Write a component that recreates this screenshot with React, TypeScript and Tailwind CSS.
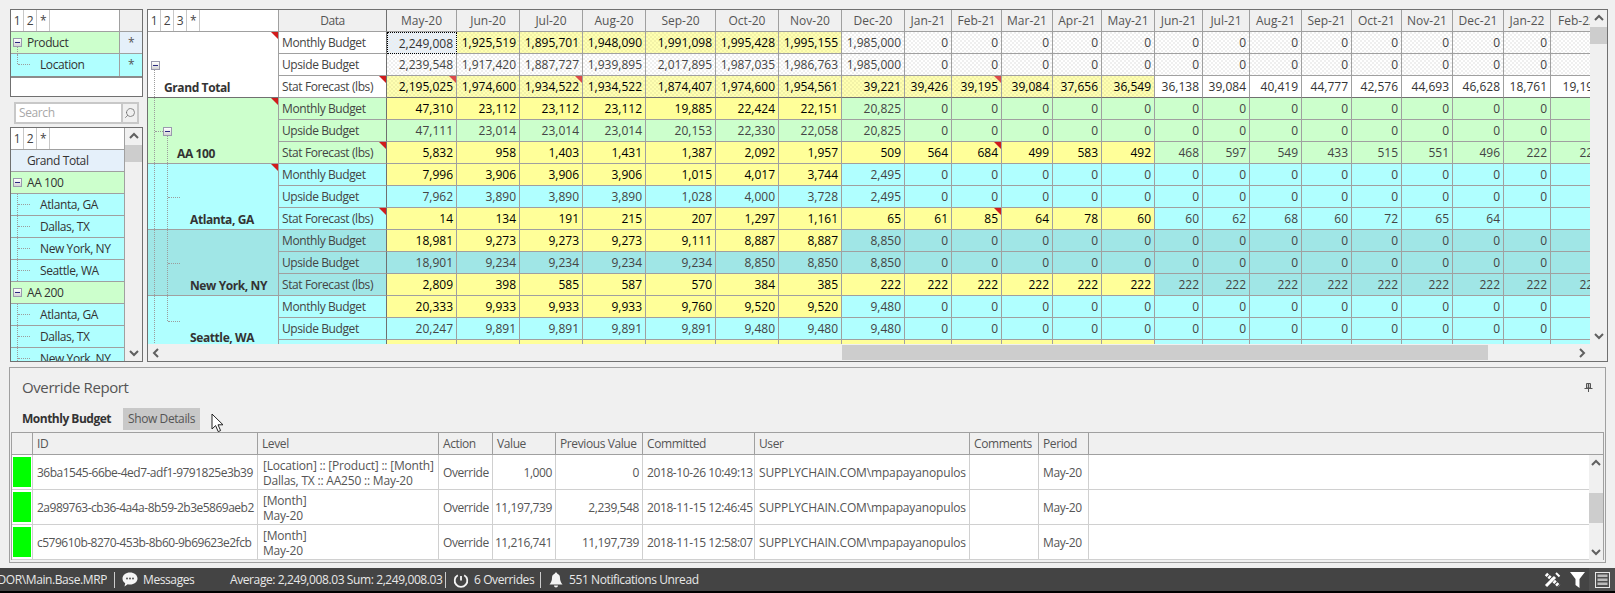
import { ReactNode } from "react"
import { Search } from "lucide-react"

const months = [
  "May-20", "Jun-20", "Jul-20", "Aug-20", "Sep-20", "Oct-20", "Nov-20", "Dec-20", "Jan-21", "Feb-21", "Mar-21",
  "Apr-21", "May-21", "Jun-21", "Jul-21", "Aug-21", "Sep-21", "Oct-21", "Nov-21", "Dec-21", "Jan-22", "Feb-22",
]

const zeros = Array(14).fill("0")

const dots =
  "bg-[radial-gradient(circle_at_1px_1px,#eeeeee_0.7px,transparent_0.8px),radial-gradient(circle_at_3px_3px,#eeeeee_0.7px,transparent_0.8px)] bg-[length:4px_4px]"
const yellowDots =
  "bg-[#ffffb0] bg-[radial-gradient(circle_at_1px_1px,#f2f2a8_0.7px,transparent_0.8px),radial-gradient(circle_at_3px_3px,#f2f2a8_0.7px,transparent_0.8px)] bg-[length:4px_4px]"

interface Row {
  name: string
  vals: string[]
  yellow: number
  marks?: number[]
  plainFrom?: number
}

interface Group {
  label: string
  base: string
  yellowCls: string
  cellCls: string
  pad: string
  labelBottom: string
  mark?: boolean
  lines: ReactNode
  bottom: string
  rows: Row[]
}

const V = "absolute border-l border-dotted border-[#9c9c9c]"
const H = "absolute border-t border-dotted border-[#9c9c9c]"

const groups: Group[] = [
  {
    label: "Grand Total",
    base: "bg-white",
    yellowCls: yellowDots,
    cellCls: `bg-white ${dots}`,
    pad: "pl-[16px]",
    labelBottom: "pb-[1px]",
    mark: true,
    bottom: "border-b-[#707070]",
    lines: (
      <>
        <span className="absolute left-[3px] top-[29px]"><Minus /></span>
        <span className={`${V} left-[6px] top-[38px] bottom-0`} />
      </>
    ),
    rows: [
      {
        name: "Monthly Budget",
        vals: ["2,249,008", "1,925,519", "1,895,701", "1,948,090", "1,991,098", "1,995,428", "1,995,155", "1,985,000", ...zeros],
        yellow: 7,
      },
      {
        name: "Upside Budget",
        vals: ["2,239,548", "1,917,420", "1,887,727", "1,939,895", "2,017,895", "1,987,035", "1,986,763", "1,985,000", ...zeros],
        yellow: 0,
      },
      {
        name: "Stat Forecast (lbs)",
        vals: ["2,195,025", "1,974,600", "1,934,522", "1,934,522", "1,874,407", "1,974,600", "1,954,561", "39,221", "39,426", "39,195", "39,084", "37,656", "36,549", "36,138", "39,084", "40,419", "44,777", "42,576", "44,693", "46,628", "18,761", "19,191"],
        yellow: 13,
        marks: [0, 2, 9],
        plainFrom: 13,
      },
    ],
  },
  {
    label: "AA 100",
    base: "bg-[#ccffcc]",
    yellowCls: "bg-[#ffff99]",
    cellCls: "bg-[#ccffcc]",
    pad: "pl-[29px]",
    labelBottom: "pb-[1px]",
    mark: true,
    bottom: "",
    lines: (
      <>
        <span className={`${V} left-[6px] top-0 bottom-0`} />
        <span className={`${H} left-[7px] w-[8px] top-[33px]`} />
        <span className="absolute left-[15px] top-[29px]"><Minus /></span>
        <span className={`${V} left-[19px] top-[38px] bottom-0`} />
      </>
    ),
    rows: [
      {
        name: "Monthly Budget",
        vals: ["47,310", "23,112", "23,112", "23,112", "19,885", "22,424", "22,151", "20,825", ...zeros],
        yellow: 7,
      },
      {
        name: "Upside Budget",
        vals: ["47,111", "23,014", "23,014", "23,014", "20,153", "22,330", "22,058", "20,825", ...zeros],
        yellow: 0,
      },
      {
        name: "Stat Forecast (lbs)",
        vals: ["5,832", "958", "1,403", "1,431", "1,387", "2,092", "1,957", "509", "564", "684", "499", "583", "492", "468", "597", "549", "433", "515", "551", "496", "222", "222"],
        yellow: 13,
        marks: [9],
      },
    ],
  },
  {
    label: "Atlanta, GA",
    base: "bg-[#b0ffff]",
    yellowCls: "bg-[#ffff99]",
    cellCls: "bg-[#b0ffff]",
    pad: "pl-[42px]",
    labelBottom: "pb-[1px]",
    mark: true,
    bottom: "",
    lines: (
      <>
        <span className={`${V} left-[6px] top-0 bottom-0`} />
        <span className={`${V} left-[19px] top-0 bottom-0`} />
        <span className={`${H} left-[20px] w-[12px] top-[33px]`} />
      </>
    ),
    rows: [
      {
        name: "Monthly Budget",
        vals: ["7,996", "3,906", "3,906", "3,906", "1,015", "4,017", "3,744", "2,495", ...zeros],
        yellow: 7,
      },
      {
        name: "Upside Budget",
        vals: ["7,962", "3,890", "3,890", "3,890", "1,028", "4,000", "3,728", "2,495", ...zeros],
        yellow: 0,
      },
      {
        name: "Stat Forecast (lbs)",
        vals: ["14", "134", "191", "215", "207", "1,297", "1,161", "65", "61", "85", "64", "78", "60", "60", "62", "68", "60", "72", "65", "64", "", ""],
        yellow: 13,
        marks: [9],
      },
    ],
  },
  {
    label: "New York, NY",
    base: "bg-[#a0e6e6]",
    yellowCls: "bg-[#ffff99]",
    cellCls: "bg-[#a0e6e6]",
    pad: "pl-[42px]",
    labelBottom: "pb-[1px]",
    bottom: "",
    lines: (
      <>
        <span className={`${V} left-[6px] top-0 bottom-0`} />
        <span className={`${V} left-[19px] top-0 bottom-0`} />
        <span className={`${H} left-[20px] w-[12px] top-[33px]`} />
      </>
    ),
    rows: [
      {
        name: "Monthly Budget",
        vals: ["18,981", "9,273", "9,273", "9,273", "9,111", "8,887", "8,887", "8,850", ...zeros],
        yellow: 7,
      },
      {
        name: "Upside Budget",
        vals: ["18,901", "9,234", "9,234", "9,234", "9,234", "8,850", "8,850", "8,850", ...zeros],
        yellow: 0,
      },
      {
        name: "Stat Forecast (lbs)",
        vals: ["2,809", "398", "585", "587", "570", "384", "385", "222", "222", "222", "222", "222", "222", "222", "222", "222", "222", "222", "222", "222", "222", "222"],
        yellow: 13,
      },
    ],
  },
  {
    label: "Seattle, WA",
    base: "bg-[#b0ffff]",
    yellowCls: "bg-[#ffff99]",
    cellCls: "bg-[#b0ffff]",
    pad: "pl-[42px]",
    labelBottom: "pb-[15px]",
    bottom: "",
    lines: (
      <>
        <span className={`${V} left-[6px] top-0 bottom-0`} />
        <span className={`${V} left-[19px] top-0 h-[25px]`} />
        <span className={`${H} left-[20px] w-[12px] top-[25px]`} />
      </>
    ),
    rows: [
      {
        name: "Monthly Budget",
        vals: ["20,333", "9,933", "9,933", "9,933", "9,760", "9,520", "9,520", "9,480", ...zeros],
        yellow: 7,
      },
      {
        name: "Upside Budget",
        vals: ["20,247", "9,891", "9,891", "9,891", "9,891", "9,480", "9,480", "9,480", ...zeros],
        yellow: 0,
      },
      {
        name: "Stat Forecast (lbs)",
        vals: Array(22).fill(""),
        yellow: 13,
      },
    ],
  },
]

const reportRows = [
  {
    id: "36ba1545-66be-4ed7-adf1-9791825e3b39",
    level: ["[Location] :: [Product] :: [Month]", "Dallas, TX :: AA250 :: May-20"],
    value: "1,000",
    prev: "0",
    committed: "2018-10-26 10:49:13",
  },
  {
    id: "2a989763-cb36-4a4a-8b59-2b3e5869aeb2",
    level: ["[Month]", "May-20"],
    value: "11,197,739",
    prev: "2,239,548",
    committed: "2018-11-15 12:46:45",
  },
  {
    id: "c579610b-8270-453b-8b60-9b69623e2fcb",
    level: ["[Month]", "May-20"],
    value: "11,216,741",
    prev: "11,197,739",
    committed: "2018-11-15 12:58:07",
  },
]

const listRows = [
  { label: "Grand Total", kind: "total" },
  { label: "AA 100", kind: "group" },
  { label: "Atlanta, GA", kind: "city" },
  { label: "Dallas, TX", kind: "city" },
  { label: "New York, NY", kind: "city" },
  { label: "Seattle, WA", kind: "city" },
  { label: "AA 200", kind: "group" },
  { label: "Atlanta, GA", kind: "city" },
  { label: "Dallas, TX", kind: "city" },
  { label: "New York, NY", kind: "city" },
]

function Minus() {
  return (
    <span className="flex h-[9px] w-[9px] items-center justify-center border border-[#9a9aae] bg-gradient-to-b from-white to-[#d4d4d4]">
      <span className="h-px w-[5px] bg-[#2a2a80]" />
    </span>
  )
}

function Chevron({ dir }: { dir: "up" | "down" | "left" | "right" }) {
  const pts = {
    up: "1,6 5,2 9,6",
    down: "1,3 5,7 9,3",
    left: "6,1 2,5 6,9",
    right: "3,1 7,5 3,9",
  }[dir]
  return (
    <svg width="10" height="10" viewBox="0 0 10 10" fill="none" stroke="#606060" strokeWidth="2">
      <polyline points={pts} />
    </svg>
  )
}

function Corner({ cls = "" }: { cls?: string }) {
  return <span className={`absolute right-0 top-0 h-[7px] w-[7px] [clip-path:polygon(0_0,100%_0,100%_100%)] ${cls || "bg-[#d01c1c]"}`} />
}

function Levels({ items }: { items: string[] }) {
  return (
    <div className="flex h-full text-[#444]">
      {items.map((n) => (
        <span key={n} className="flex h-full w-[13px] items-center justify-center border-r border-[#c8c8c8]">
          {n}
        </span>
      ))}
    </div>
  )
}

function VScroll({ thumb = "h-[17px]", gap = "" }: { thumb?: string; gap?: string }) {
  return (
    <div className="flex h-full w-full flex-col bg-[#f0f0f0]">
      <div className="flex h-[17px] shrink-0 items-center justify-center"><Chevron dir="up" /></div>
      <div className={`${gap} ${thumb} shrink-0 bg-[#cdcdcd]`} />
      <div className="flex-1" />
      <div className="flex h-[17px] shrink-0 items-center justify-center"><Chevron dir="down" /></div>
    </div>
  )
}

function ListRow({ label, kind }: { label: string; kind: string }) {
  const bg = kind === "total" ? "bg-[#e5f0fa]" : kind === "group" ? "bg-[#ccffcc]" : "bg-[#b0ffff]"
  const pad = kind === "city" ? "pl-[29px]" : "pl-[16px]"
  return (
    <div className={`relative flex h-[22px] shrink-0 items-center border-b border-[#a0a0a0] pt-px ${bg} ${pad} text-[#333]`}>
      {kind === "group" && <span className="absolute left-[2px] top-[6px]"><Minus /></span>}
      {kind === "city" && (
        <>
          <span className={`${V} left-[6px] top-0 bottom-0`} />
          <span className={`${H} left-[7px] top-[10px] w-[12px]`} />
        </>
      )}
      {label}
    </div>
  )
}

function LeftPanel() {
  return (
    <div className="flex h-full w-[133px] shrink-0 flex-col">
      <div className="h-[88px] border border-[#707070] bg-white">
        <div className="grid grid-cols-[109px_22px] auto-rows-[22px] border-b-2 border-[#8c8c8c]">
          <div className="border-b border-r border-[#a0a0a0]"><Levels items={["1", "2", "*"]} /></div>
          <div className="border-b border-[#a0a0a0] bg-[#f0f0f0]" />
          <div className="relative flex items-center border-b border-r border-[#a0a0a0] bg-[#ccffcc] pl-[16px] text-[#333]">
            <span className="absolute left-[2px] top-[6px]"><Minus /></span>
            <span className={`${V} left-[6px] top-[15px] h-[17px]`} />
            Product
          </div>
          <div className="flex items-center justify-center border-b border-[#a0a0a0] bg-[#e5f0fa] text-[#555]">*</div>
          <div className="relative flex items-center border-r border-[#a0a0a0] bg-[#b0ffff] pl-[29px] text-[#333]">
            <span className={`${V} left-[6px] top-0 h-[10px]`} />
            <span className={`${H} left-[7px] top-[10px] w-[12px]`} />
            Location
          </div>
          <div className="flex items-center justify-center bg-[#b0ffff] text-[#555]">*</div>
        </div>
      </div>
      <div className="mx-[4px] mt-[5px] flex h-[22px] shrink-0 border-2 border-[#c8c8c8] bg-white">
        <span className="flex-1 pl-[3px] leading-[17px] text-[#a8a8a8]">Search</span>
        <span className="flex w-[16px] items-center justify-center border-l-2 border-[#c8c8c8] bg-[#f0f0f0]">
          <Search size={12} strokeWidth={1.6} className="-scale-x-100 text-[#707070]" />
        </span>
      </div>
      <div className="mt-[3px] flex h-[235px] shrink-0 overflow-hidden border border-[#707070] bg-white">
        <div className="flex w-[114px] shrink-0 flex-col overflow-hidden border-r border-[#a0a0a0]">
          <div className="h-[22px] shrink-0 border-b border-[#a0a0a0]"><Levels items={["1", "2", "*"]} /></div>
          {listRows.map((r, i) => (
            <ListRow key={i} label={r.label} kind={r.kind} />
          ))}
        </div>
        <div className="w-[17px]"><VScroll /></div>
      </div>
    </div>
  )
}

function MainGrid() {
  return (
    <div className="h-full w-[1461px] shrink-0 border border-[#707070] bg-[#f0f0f0]">
      <div className="flex h-[351px]">
        <div className="flex w-[1442px] shrink-0 flex-col">
          <div className="h-[334px] overflow-hidden">
            <div className="grid w-[1456px] grid-cols-[131px_108px_70px_63px_63px_63px_70px_63px_63px_63px_47px_50px_51px_49px_53px_48px_47px_52px_50px_50px_51px_51px_47px_53px] auto-rows-[22px]">
              <div className="border-b border-r border-[#a0a0a0] bg-white"><Levels items={["1", "2", "3", "*"]} /></div>
              <div className="flex items-center justify-center border-b border-r border-b-[#a0a0a0] border-r-[#707070] bg-[#f0f0f0] text-[#555]">Data</div>
              {months.map((m) => (
                <div key={m} className="flex items-center justify-center overflow-hidden whitespace-nowrap border-b border-r border-[#a0a0a0] bg-[#f0f0f0] tracking-normal text-[#555]">
                  {m}
                </div>
              ))}
              {groups.map((g) => (
                <TreeGroup key={g.label} g={g} />
              ))}
            </div>
          </div>
          <div className="flex h-[17px] items-center">
            <div className="flex h-full w-[17px] shrink-0 items-center justify-center"><Chevron dir="left" /></div>
            <div className="ml-[677px] h-[15px] w-[646px] shrink-0 bg-[#cdcdcd]" />
            <div className="flex-1" />
            <div className="flex h-full w-[17px] shrink-0 items-center justify-center"><Chevron dir="right" /></div>
          </div>
        </div>
        <div className="flex-1 pb-[17px]"><VScroll /></div>
      </div>
    </div>
  )
}

function TreeGroup({ g }: { g: Group }) {
  return (
    <>
      {g.rows.map((r, ri) => (
        <RowCells key={r.name} g={g} r={r} ri={ri} />
      ))}
    </>
  )
}

function RowCells({ g, r, ri }: { g: Group; r: Row; ri: number }) {
  const line = ri === 2 ? g.bottom : ""
  const dither = g.label === "Grand Total"
  return (
    <>
      {ri === 0 && (
        <div className={`relative row-span-3 flex items-end border-b border-r border-[#a0a0a0] ${g.base} ${g.bottom} ${g.pad} ${g.labelBottom} font-bold leading-[16px] text-[#333]`}>
          {g.lines}
          {g.mark && <Corner />}
          {g.label}
        </div>
      )}
      <div className={`relative flex items-center border-b border-r border-b-[#a0a0a0] border-r-[#707070] pl-[3px] pt-px whitespace-nowrap text-[#444] ${g.base} ${line}`}>
        {ri === 2 && g.mark && <Corner />}
        {r.name}
      </div>
      {r.vals.map((v, i) => {
        const yellow = i < r.yellow
        let cell = yellow ? `${g.yellowCls} text-black` : `${g.cellCls} text-[#444]`
        if (r.plainFrom !== undefined && i >= r.plainFrom) cell = "bg-white text-[#333]"
        const selected = dither && ri === 0 && i === 0
        if (selected) cell = `bg-[#e5f0fa] ${dots} text-[#333]`
        return (
          <div
            key={i}
            className={`relative flex items-center justify-end whitespace-nowrap pr-[3px] pt-px tracking-normal ${cell} ${
              selected ? "border border-dotted border-black" : `border-b border-r border-[#a0a0a0] ${line}`
            }`}
          >
            {r.marks?.includes(i) && <Corner cls={dither ? "bg-[#dc4a4a]" : ""} />}
            {v}
          </div>
        )
      })}
    </>
  )
}

function ReportPanel() {
  const cols = "grid grid-cols-[21px_225px_181px_54px_63px_87px_112px_215px_69px_50px_1fr]"
  const heads = ["", "ID", "Level", "Action", "Value", "Previous Value", "Committed", "User", "Comments", "Period", ""]
  return (
    <div className="relative mx-[9px] h-[196px] shrink-0 border border-[#a0a0a0]">
      <div className="flex h-[38px] items-center justify-between pl-[12px] pr-[12px]">
        <span className="text-[15px] text-[#555]">Override Report</span>
        <svg width="9" height="9" viewBox="0 0 9 9" fill="none" stroke="#555">
          <path d="M2.5 0.5h4v4.5h-4zM0.5 5.5h8M4.5 5.5v3.5" />
          <path d="M4.5 1v4" stroke="#555" strokeWidth="1.5" />
        </svg>
      </div>
      <div className="mt-[2px] flex h-[22px] items-center pl-[12px]">
        <span className="w-[101px] font-bold tracking-[-0.5px] text-[#333]">Monthly Budget</span>
        <span className="flex h-full w-[77px] items-center justify-center bg-[#c8c8c8] text-[#555]">Show Details</span>
      </div>
      <svg className="absolute left-[201px] top-[45px]" width="14" height="20" viewBox="0 0 14 20">
        <path d="M1 1v15l3.6-3.4 2.6 6 2.4-1-2.6-5.8h5z" fill="#fff" stroke="#222" strokeWidth="1" />
      </svg>
      <div className="ml-[1px] mr-[1px] mt-[2px] h-[128px] border border-[#a0a0a0] bg-white">
        <div className={`${cols} h-[22px] border-b border-[#a0a0a0] bg-[#f0f0f0] text-[#555]`}>
          {heads.map((h, i) => (
            <div key={i} className={`flex items-center whitespace-nowrap pl-[4px] ${i === 10 ? "" : "border-r border-[#a0a0a0]"}`}>
              {h}
            </div>
          ))}
        </div>
        <div className="flex h-[105px]">
          <div className="w-[1577px] shrink-0">
            {reportRows.map((r) => (
              <div key={r.id} className={`${cols} h-[35px] border-b border-[#d0d0d0] text-[#555]`}>
                <div className="border-r border-[#d0d0d0] px-px py-[2px]"><div className="h-full bg-[#00ff00]" /></div>
                <div className="flex items-center whitespace-nowrap border-r border-[#d0d0d0] pl-[4px] pt-px tracking-[-0.5px]">{r.id}</div>
                <div className="flex flex-col justify-center whitespace-nowrap border-r border-[#d0d0d0] pl-[5px] pt-px leading-[15px] tracking-[-0.2px]">
                  <span>{r.level[0]}</span>
                  <span>{r.level[1]}</span>
                </div>
                <div className="flex items-center border-r border-[#d0d0d0] pl-[4px] pt-px">Override</div>
                <div className="flex items-center justify-end border-r border-[#d0d0d0] pr-[3px] pt-px">{r.value}</div>
                <div className="flex items-center justify-end border-r border-[#d0d0d0] pr-[3px] pt-px">{r.prev}</div>
                <div className="flex items-center whitespace-nowrap border-r border-[#d0d0d0] pl-[4px] pt-px">{r.committed}</div>
                <div className="flex items-center whitespace-nowrap border-r border-[#d0d0d0] pl-[4px] pt-px tracking-[-0.15px]">SUPPLYCHAIN.COM\mpapayanopulos</div>
                <div className="border-r border-[#d0d0d0]" />
                <div className="flex items-center border-r border-[#d0d0d0] pl-[4px] pt-px">May-20</div>
                <div />
              </div>
            ))}
          </div>
          <div className="flex-1"><VScroll gap="mt-[21px]" thumb="h-[30px]" /></div>
        </div>
      </div>
    </div>
  )
}

function StatusBar() {
  return (
    <div className="mt-[5px] h-[25px] shrink-0 border-b-2 border-black bg-[#444] text-[#e8e8e8]">
      <div className="flex h-full items-center">
        <div className="flex w-[107px] shrink-0 justify-end overflow-hidden whitespace-nowrap">DOR\Main.Base.MRP</div>
        <span className="ml-[7px] h-[16px] w-px bg-[#ccc]" />
        <svg className="ml-[7px]" width="16" height="15" viewBox="0 0 16 15">
          <path d="M8 0.5c4.2 0 7.5 2.6 7.5 6s-3.3 6-7.5 6c-.8 0-1.6-.1-2.3-.3L2.5 14.5l.7-3.2C1.500 10.200.5 8.500.5 6.500c0-3.400 3.300-6 7.500-6z" fill="#f4f4f4" />
          <circle cx="5" cy="6.500" r=".9" fill="#444" />
          <circle cx="8" cy="6.500" r=".9" fill="#444" />
          <circle cx="11" cy="6.500" r=".9" fill="#444" />
        </svg>
        <span className="ml-[5px] w-[87px] shrink-0">Messages</span>
        <span className="w-[207px] shrink-0 whitespace-nowrap">Average: 2,249,008.03 Sum: 2,249,008.03</span>
        <span className="ml-[8px] h-[16px] w-px bg-[#ccc]" />
        <svg className="ml-[7px]" width="16" height="16" viewBox="0 0 16 16" fill="none" stroke="#f4f4f4" strokeWidth="1.8">
          <path d="M4.800 3.200a6.300 6.300 0 1 0 6.400 0" />
          <path d="M8 4V8.500" />
        </svg>
        <span className="ml-[5px] w-[60px] shrink-0 whitespace-nowrap">6 Overrides</span>
        <span className="ml-[6px] h-[16px] w-px bg-[#ccc]" />
        <svg className="ml-[8px]" width="14" height="16" viewBox="0 0 14 16" fill="#f4f4f4">
          <path d="M7 0.500c.8 0 1.300.6 1.300 1.300 2 .6 2.700 2.300 2.700 4.200 0 2.500.8 4.300 2.500 6.500H.5C2.200 10.300 3 8.500 3 6c0-1.900.7-3.600 2.700-4.200C5.700 1.100 6.200.5 7 .5z" />
          <path d="M5 13.500h4c0 1.200-.9 2-2 2s-2-.8-2-2z" />
        </svg>
        <span className="ml-[6px] whitespace-nowrap">551 Notifications Unread</span>
        <div className="flex-1" />
        <svg width="17" height="17" viewBox="0 0 17 17" fill="none" stroke="#fff">
          <path d="M2 3 L15 15" strokeWidth="3.500" strokeDasharray="2.500 1" />
          <path d="M2 15 L11 6" strokeWidth="3" />
          <path d="M12 2 L15.500 5.500" strokeWidth="2" />
        </svg>
        <svg className="ml-[9px]" width="15" height="16" viewBox="0 0 15 16" fill="#fff">
          <path d="M0 0h15L9.500 7v9L5.500 13V7z" />
        </svg>
        <div className="ml-[4px] flex h-full w-[26px] shrink-0 items-center justify-center bg-[#4f4f4f]">
          <svg width="15" height="16" viewBox="0 0 15 16" fill="none" stroke="#e8e8e8">
            <rect x=".5" y=".5" width="14" height="15" />
            <rect x="2.500" y="2.500" width="10" height="2.500" fill="#bbb" stroke="none" />
            <rect x="2.500" y="6.500" width="10" height="2.500" fill="#bbb" stroke="none" />
            <rect x="2.500" y="10.500" width="10" height="2.500" fill="#bbb" stroke="none" />
          </svg>
        </div>
      </div>
    </div>
  )
}

export default function App() {
  return (
    <div className="flex h-[593px] w-[1615px] flex-col overflow-hidden bg-[#f0f0f0] font-['Open_Sans',sans-serif] text-[12px] tracking-[-0.4px]">
      <div className="flex h-[367px] shrink-0 gap-[4px] pb-[5px] pl-[10px] pt-[9px]">
        <LeftPanel />
        <MainGrid />
      </div>
      <ReportPanel />
      <StatusBar />
    </div>
  )
}
